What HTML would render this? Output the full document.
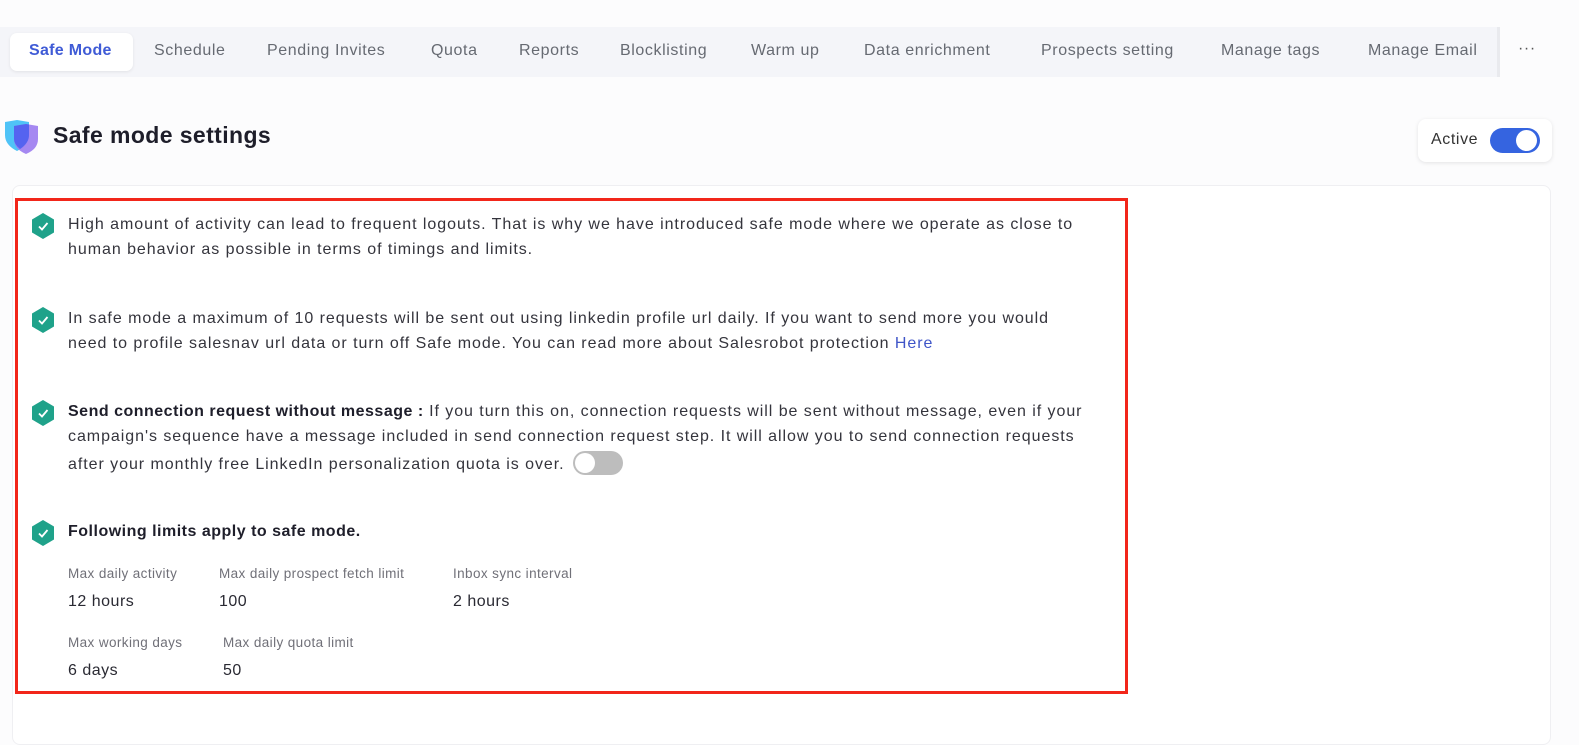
<!DOCTYPE html>
<html><head><meta charset="utf-8"><style>
*{margin:0;padding:0;box-sizing:border-box}
body{width:1579px;height:732px;background:#fcfcfd;font-family:"Liberation Sans",sans-serif;position:relative;overflow:hidden;color:#2a2a33}
.a{position:absolute;white-space:nowrap}
.tabbar{position:absolute;left:0;top:27px;width:1500px;height:50px;background:#f4f5f9;border-right:3px solid #e9eaee}
.tab{position:absolute;top:42px;font-size:16px;color:#666a72;letter-spacing:0.6px}
.act{position:absolute;left:10px;top:33px;width:123px;height:38px;background:#fff;border-radius:7px;box-shadow:0 1px 3px rgba(0,0,0,0.08)}
.t{font-size:16px;letter-spacing:0.95px;color:#34343c}
.lab{font-size:13.5px;color:#707078;letter-spacing:0.4px}
.val{font-size:16px;color:#2a2a33;letter-spacing:0.5px}
.chk{position:absolute;width:24px;height:26px}
.tg{display:inline-block;vertical-align:middle;position:relative;width:50px;height:24px;border-radius:12px;background:#bdbdbd;margin-left:8px;top:-2px}
.tg:after{content:"";position:absolute;left:2px;top:2px;width:20px;height:20px;border-radius:50%;background:#fff}
</style></head><body>
<div class="tabbar"></div>
<div class="act"></div>
<div class="tab" style="left:29px;color:#3f5bd6;font-weight:bold;letter-spacing:0.3px">Safe Mode</div>
<div class="tab" style="left:154px">Schedule</div>
<div class="tab" style="left:267px">Pending Invites</div>
<div class="tab" style="left:431px">Quota</div>
<div class="tab" style="left:519px">Reports</div>
<div class="tab" style="left:620px">Blocklisting</div>
<div class="tab" style="left:751px">Warm up</div>
<div class="tab" style="left:864px">Data enrichment</div>
<div class="tab" style="left:1041px">Prospects setting</div>
<div class="tab" style="left:1221px">Manage tags</div>
<div class="tab" style="left:1368px">Manage Email</div>
<div class="tab" style="left:1518px;top:40px;color:#555">···</div>

<svg class="a" style="left:3px;top:119px" width="38" height="36" viewBox="0 0 38 36">
<path d="M2 3 L14 1 L26 3 L26 16 Q26 26 14 32 Q2 26 2 16 Z" fill="#4fc3f7"/>
<path d="M11 7 L23 5 L35 7 L35 20 Q35 30 23 35 Q11 30 11 20 Z" fill="#9b7bf0" opacity="0.9"/>
<path d="M11 7 L23 5 L26 5.5 L26 16 Q26 24 17 30 Q11 25 11 20 Z" fill="#5563f0"/>
</svg>
<div class="a" style="left:53px;top:122px;font-size:23px;font-weight:bold;color:#1e1e2a;letter-spacing:0.4px">Safe mode settings</div>

<div class="a" style="left:1418px;top:119px;width:134px;height:43px;background:#fff;border-radius:8px;box-shadow:0 1px 4px rgba(0,0,0,0.1)"></div>
<div class="a" style="left:1431px;top:131px;font-size:16px;color:#333;letter-spacing:0.6px">Active</div>
<div class="a" style="left:1490px;top:128px;width:50px;height:25px;border-radius:13px;background:#3564e0"></div>
<div class="a" style="left:1516px;top:130px;width:21px;height:21px;border-radius:50%;background:#fff"></div>

<div class="a" style="left:12px;top:185px;width:1539px;height:560px;background:#fff;border:1px solid #efeff2;border-radius:8px"></div>
<div class="a" style="left:15px;top:198px;width:1113px;height:496px;border:3px solid #f2261a"></div>

<svg class="chk" style="left:31px;top:213px" viewBox="0 0 24 26"><path d="M12 0 L23 6.5 L23 19.5 L12 26 L1 19.5 L1 6.5 Z" fill="#1fa28a"/><path d="M8 13.5 L11 16.5 L16.5 10" stroke="#fff" stroke-width="1.8" fill="none"/></svg>
<div class="a t" style="left:68px;top:216px">High amount of activity can lead to frequent logouts. That is why we have introduced safe mode where we operate as close to</div>
<div class="a t" style="left:68px;top:241px">human behavior as possible in terms of timings and limits.</div>

<svg class="chk" style="left:31px;top:307px" viewBox="0 0 24 26"><path d="M12 0 L23 6.5 L23 19.5 L12 26 L1 19.5 L1 6.5 Z" fill="#1fa28a"/><path d="M8 13.5 L11 16.5 L16.5 10" stroke="#fff" stroke-width="1.8" fill="none"/></svg>
<div class="a t" style="left:68px;top:310px">In safe mode a maximum of 10 requests will be sent out using linkedin profile url daily. If you want to send more you would</div>
<div class="a t" style="left:68px;top:335px">need to profile salesnav url data or turn off Safe mode. You can read more about Salesrobot protection <span style="color:#3f55c8">Here</span></div>

<svg class="chk" style="left:31px;top:400px" viewBox="0 0 24 26"><path d="M12 0 L23 6.5 L23 19.5 L12 26 L1 19.5 L1 6.5 Z" fill="#1fa28a"/><path d="M8 13.5 L11 16.5 L16.5 10" stroke="#fff" stroke-width="1.8" fill="none"/></svg>
<div class="a t" style="left:68px;top:403px"><b style="color:#1e1e2a;letter-spacing:0.5px">Send connection request without message :</b> If you turn this on, connection requests will be sent without message, even if your</div>
<div class="a t" style="left:68px;top:428px">campaign's sequence have a message included in send connection request step. It will allow you to send connection requests</div>
<div class="a t" style="left:68px;top:453px">after your monthly free LinkedIn personalization quota is over.<span class="tg"></span></div>

<svg class="chk" style="left:31px;top:520px" viewBox="0 0 24 26"><path d="M12 0 L23 6.5 L23 19.5 L12 26 L1 19.5 L1 6.5 Z" fill="#1fa28a"/><path d="M8 13.5 L11 16.5 L16.5 10" stroke="#fff" stroke-width="1.8" fill="none"/></svg>
<div class="a t" style="left:68px;top:523px;font-weight:bold;color:#1e1e2a;letter-spacing:0.5px">Following limits apply to safe mode.</div>

<div class="a lab" style="left:68px;top:566px">Max daily activity</div>
<div class="a lab" style="left:219px;top:566px">Max daily prospect fetch limit</div>
<div class="a lab" style="left:453px;top:566px">Inbox sync interval</div>
<div class="a val" style="left:68px;top:593px">12 hours</div>
<div class="a val" style="left:219px;top:593px">100</div>
<div class="a val" style="left:453px;top:593px">2 hours</div>
<div class="a lab" style="left:68px;top:635px">Max working days</div>
<div class="a lab" style="left:223px;top:635px">Max daily quota limit</div>
<div class="a val" style="left:68px;top:662px">6 days</div>
<div class="a val" style="left:223px;top:662px">50</div>
</body></html>
